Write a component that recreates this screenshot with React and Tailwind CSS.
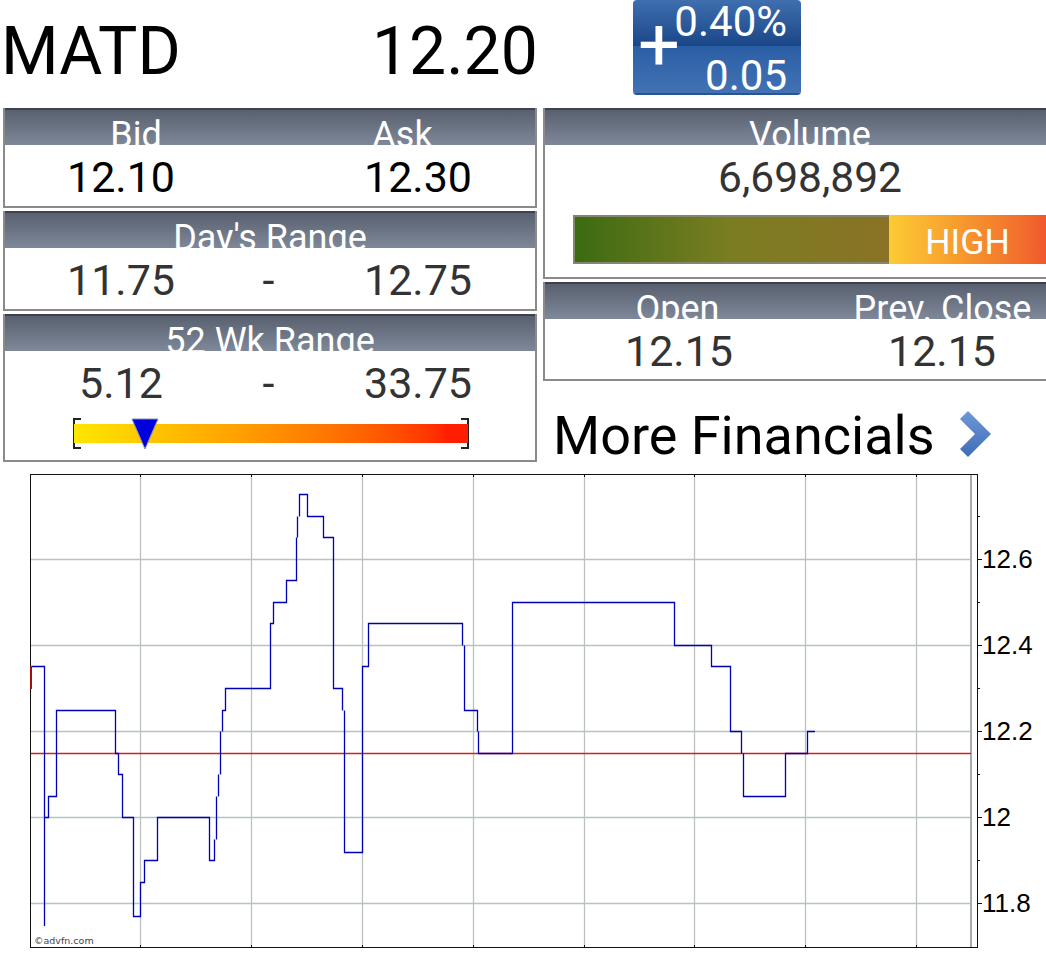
const pricePath =
  "M31.5 666.5H44.5V926V817.5H48.5V796.5H56.5V710.5H115.5V753.5H118.5V774.5H122.5V817.5H133.5V916.5H140.5V882.5H144.5V860.5H157.5V817.5H209.5V860.5H214.5V839.5M216.5 839.5V796.5M218.5 796.5V774.5M220.5 774.5V731.5M222.5 731.5V710.5H225.5V688.5H270.5V623.5H273.5V602.5H286.5V580.5H296.5V537.5M297.5 537.5V516.5M299.5 516.5V494.5H307.5V516.5H323.5V537.5H333.5V688.5H342.5V710.5M344.5 710.5V852.5H362.5V666.5H368.5V623.5H462.5V645.5M464.5 645.5V710.5H477.5V731.5M478.5 731.5V753.5H512.5V602.5H674.5V645.5H711.5V666.5H730.5V731.5H741.5V753.5M743.5 753.5V796.5H785.5V753.5H807.5V731.5H815";

const vGrid = [140.5, 251.5, 362.5, 473.5, 584.5, 694.5, 805.5, 916.5];
const hGrid = [
  { y: 559.5, label: "12.6" },
  { y: 645.5, label: "12.4" },
  { y: 731.5, label: "12.2" },
  { y: 817.5, label: "12" },
  { y: 903.5, label: "11.8" },
];
const minorTicks = [516.5, 602.5, 688.5, 774.5, 860.5];

function Panel({ className, children }) {
  return (
    <div className={`w-[534px] shrink-0 bg-white border-x-2 border-b-2 border-[#8a8a8a] ${className}`}>
      {children}
    </div>
  );
}

// labels run taller than the bar and get cut off, same as the screenshot
function PanelHeader({ labels, className = "" }) {
  return (
    <div
      className={`h-[37px] overflow-hidden border-t-2 border-[#3d424c] bg-gradient-to-b from-[#596170] to-[#7f8899] grid ${className}`}
    >
      {labels.map((label) => (
        <div key={label} className="pt-[7px] text-center text-[36px] leading-[36px] text-white whitespace-nowrap">
          {label}
        </div>
      ))}
    </div>
  );
}

function RangeRow({ low, high }) {
  return (
    <div className="pt-[11px] grid grid-cols-[232px_63px_236px] text-center text-[43px] leading-[43px] text-[#333333]">
      <div>{low}</div>
      <div>-</div>
      <div>{high}</div>
    </div>
  );
}

function ChangeBadge() {
  return (
    <div className="relative w-[168px] h-[95px] rounded-[4px] overflow-hidden border-b-2 border-[#2a5590] text-white text-right text-[42px] leading-[42px]">
      <div className="h-[46px] bg-gradient-to-b from-[#3f6fae] to-[#1a4688]" />
      <div className="h-[47px] bg-gradient-to-b from-[#2a5ea4] to-[#4272b4]" />
      <div className="absolute top-[1px] right-[14px]">0.40%</div>
      <div className="absolute top-[55px] right-[14px]">0.05</div>
      <div className="absolute top-[8px] left-[5px] text-[74px] leading-[74px]">+</div>
    </div>
  );
}

function YearBar() {
  return (
    <div className="relative mt-[13px] ml-[68px] w-[396px] h-[31px]">
      <div className="absolute left-0 top-0 w-[8px] h-[31px] border-y-2 border-l-2 border-[#222222]" />
      <div className="absolute right-0 top-0 w-[8px] h-[31px] border-y-2 border-r-2 border-[#222222]" />
      <div className="absolute left-[1px] right-[1px] top-[6px] h-[19px] bg-gradient-to-r from-[#ffe600] to-[#ff1e00] to-95%" />
      <svg className="absolute left-[58px] top-0" width="28" height="32" viewBox="0 0 28 32">
        <polygon points="1,1 27,1 14,31" fill="#0000dc" stroke="#8d8db8" strokeWidth="1" />
      </svg>
    </div>
  );
}

function Chart() {
  return (
    <svg className="block" width="1046" height="485" viewBox="0 470 1046 485">
      <g fill="none" strokeWidth="1.3">
        {hGrid.map((g) => (
          <line key={g.y} x1="31" x2="971" y1={g.y} y2={g.y} stroke="#b8c2c4" />
        ))}
        {vGrid.map((x) => (
          <line key={x} x1={x} x2={x} y1="475" y2="948" stroke="#bcc0c0" />
        ))}
      </g>
      <g shapeRendering="crispEdges" fill="none">
        {vGrid.map((x) => (
          <g key={x} stroke="#111111">
            <line x1={x} x2={x} y1="475" y2="477" />
            <line x1={x} x2={x} y1="945" y2="948" />
          </g>
        ))}
        <line x1="971" x2="971" y1="475" y2="948" stroke="#a8acac" strokeWidth="2" />
        <rect x="30.5" y="474.5" width="947" height="473" stroke="#111111" />
        {hGrid.map((g) => (
          <line key={g.y} x1="978" x2="982" y1={g.y} y2={g.y} stroke="#111111" />
        ))}
        {minorTicks.map((y) => (
          <line key={y} x1="978" x2="980" y1={y} y2={y} stroke="#111111" />
        ))}
      </g>
      <g fill="none">
        <line x1="31" x2="971" y1="753.5" y2="753.5" stroke="#d42020" strokeWidth="1.5" />
        <path d={pricePath} stroke="#0000b4" strokeWidth="1.3" />
        <line x1="31" x2="31" y1="666" y2="689" stroke="#a01010" strokeWidth="2" />
      </g>
      {hGrid.map((g) => (
        <text key={g.label} x="982" y={g.y + 8.5} fontFamily="Liberation Sans" fontSize="26" fill="#000000">
          {g.label}
        </text>
      ))}
      <text x="34" y="944" fontFamily="DejaVu Sans" fontSize="9.5" fill="#444444">
        ©advfn.com
      </text>
    </svg>
  );
}

export default function App() {
  return (
    <div className="relative w-[1046px] h-[955px] overflow-hidden bg-white font-[family-name:Roboto,sans-serif]">
      {/* Symbol, price and change */}
      <div className="h-[108px] flex items-start">
        <div className="w-[372px] pl-[1px] pt-[14px] text-[66px] leading-[76px] text-black">MATD</div>
        <div className="w-[261px] pt-[14px] text-[66px] leading-[76px] text-black">12.20</div>
        <ChangeBadge />
      </div>

      <div className="flex h-[354px] pl-[3px] gap-[6px] w-[1100px]">
        {/* Left column */}
        <div className="flex flex-col gap-[3px]">
          <Panel className="h-[100px]">
            <PanelHeader labels={["Bid", "Ask"]} className="grid-cols-[262px_271px]" />
            <div className="pt-[11px] grid grid-cols-[232px_63px_236px] text-center text-[43px] leading-[43px] text-black">
              <div>12.10</div>
              <div />
              <div>12.30</div>
            </div>
          </Panel>
          <Panel className="h-[100px]">
            <PanelHeader labels={["Day's Range"]} />
            <RangeRow low="11.75" high="12.75" />
          </Panel>
          <Panel className="h-[148px]">
            <PanelHeader labels={["52 Wk Range"]} />
            <RangeRow low="5.12" high="33.75" />
            <YearBar />
          </Panel>
        </div>

        {/* Right column */}
        <div className="flex flex-col gap-[3px]">
          <Panel className="h-[171px]">
            <PanelHeader labels={["Volume"]} />
            <div className="pt-[11px] text-center text-[42.5px] leading-[43px] text-[#333333]">6,698,892</div>
            <div className="mt-[16px] ml-[28px] w-[473px] h-[49px] flex">
              <div className="w-[316px] border-y-2 border-l-2 border-[#86866e] bg-gradient-to-r from-[#3b6b12] via-[#7b7d22] to-[#8a7226]" />
              <div className="w-[157px] pt-[7px] flex items-center justify-center bg-gradient-to-r from-[#fbcb34] via-[#f6952e] to-[#f0592c] text-[35.5px] text-white">
                HIGH
              </div>
            </div>
          </Panel>
          <Panel className="h-[99px]">
            <PanelHeader labels={["Open", "Prev. Close"]} className="grid-cols-2" />
            <div className="pt-[11px] grid grid-cols-[268px_258px] text-center text-[43px] leading-[43px] text-[#333333]">
              <div>12.15</div>
              <div>12.15</div>
            </div>
          </Panel>
          <div className="mt-[18px] ml-[10px] flex items-start gap-[24px] shrink-0">
            <span className="mt-[4px] text-[54px] leading-[60px] text-black">More Financials</span>
            <svg className="mt-[8px]" width="34" height="48" viewBox="0 0 34 48">
              <defs>
                <linearGradient id="chev" x1="0" y1="0" x2="0" y2="1">
                  <stop offset="0" stopColor="#6f97d6" />
                  <stop offset="1" stopColor="#3f6db8" />
                </linearGradient>
              </defs>
              <polygon points="9,1 32,24 9,47 1,39 16,24 1,9" fill="url(#chev)" />
            </svg>
          </div>
        </div>
      </div>

      <div className="mt-[8px]">
        <Chart />
      </div>
    </div>
  );
}
